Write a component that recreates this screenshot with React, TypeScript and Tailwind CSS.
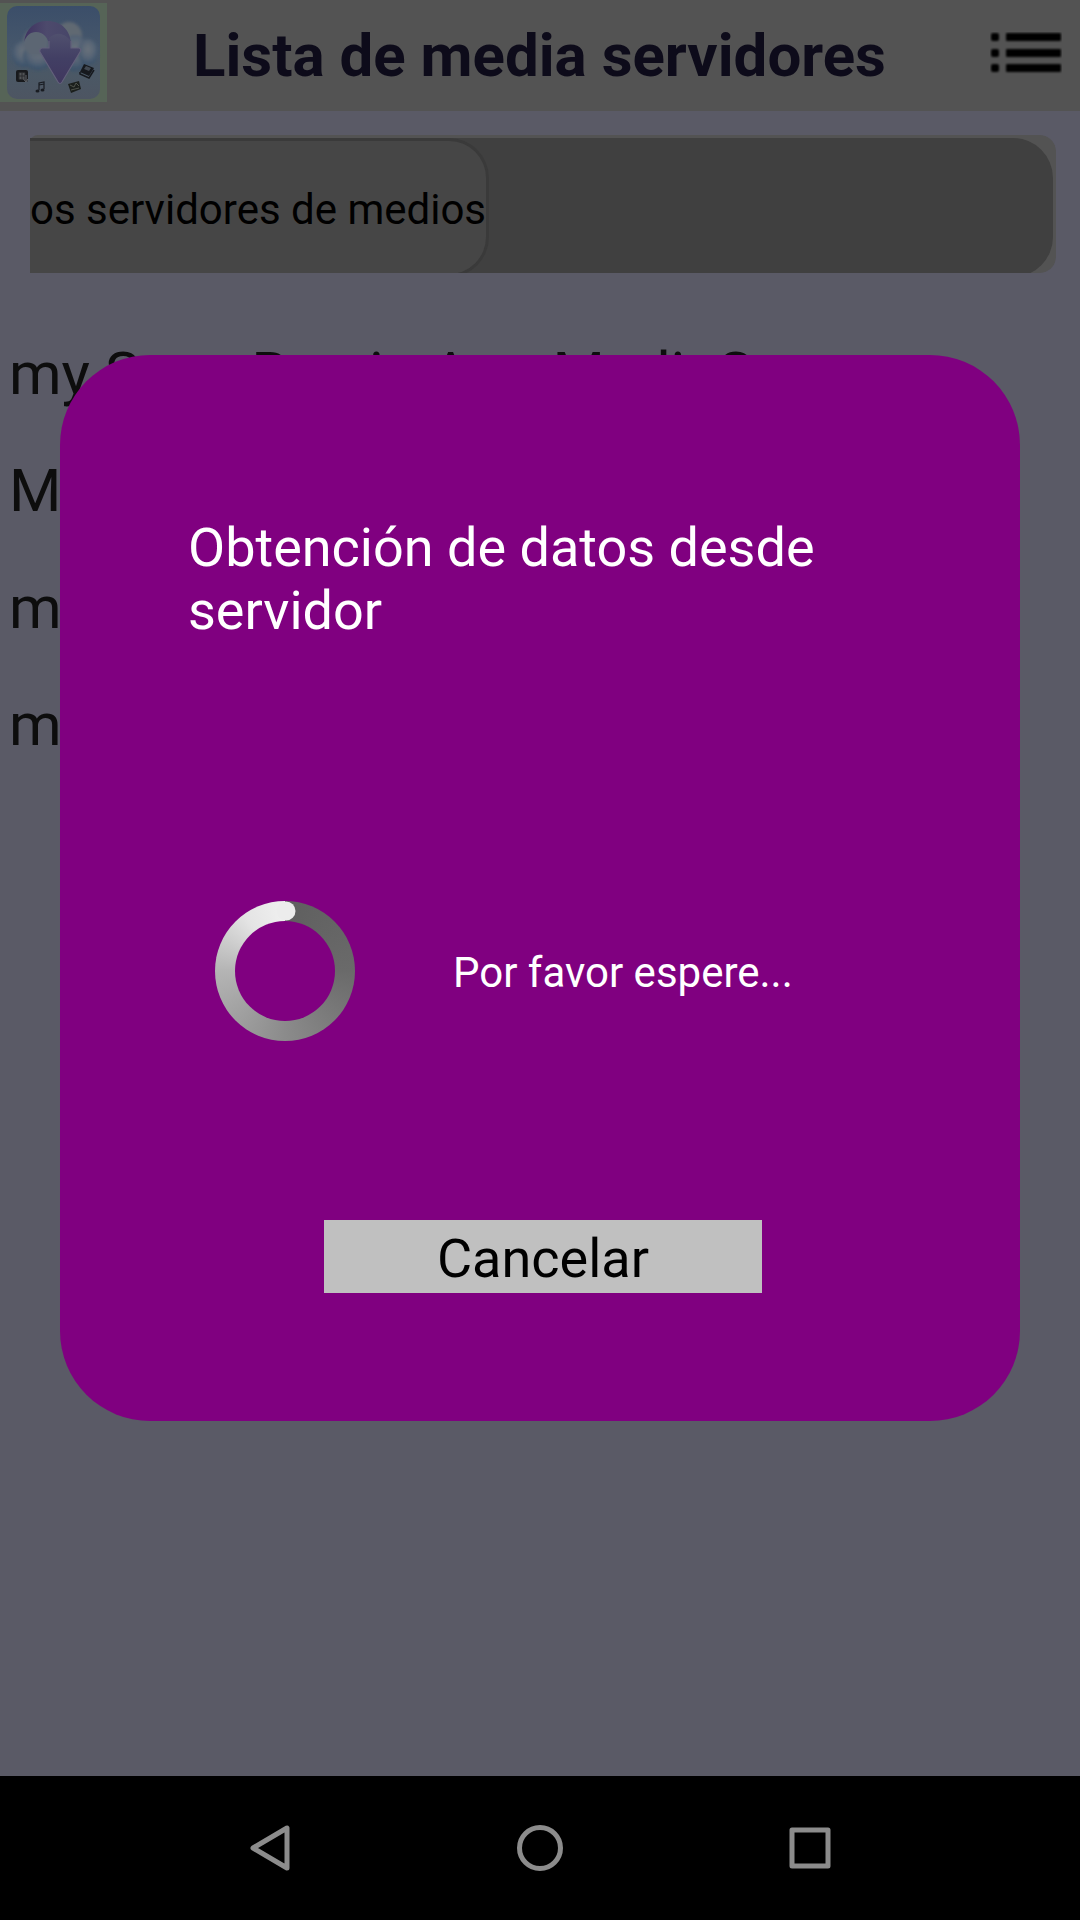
import { useState } from "react";

const servers = [
  "my Sony Bravia App MediaServer",
  "Media Server",
  "media server",
  "media server",
];

const AppLogo = () => (
  <svg viewBox="0 0 107 99" className="h-[99px] w-[107px]" aria-hidden="true">
    <defs>
      <linearGradient id="sky" x1="0" y1="0" x2="0" y2="1">
        <stop offset="0" stopColor="#3b4e69" />
        <stop offset="0.45" stopColor="#46576b" />
        <stop offset="0.75" stopColor="#4b5865" />
        <stop offset="1" stopColor="#4d5562" />
      </linearGradient>
      <linearGradient id="arrow" x1="0" y1="0" x2="0" y2="1">
        <stop offset="0" stopColor="#50506e" />
        <stop offset="0.5" stopColor="#423f64" />
        <stop offset="1" stopColor="#40375e" />
      </linearGradient>
      <linearGradient id="tail" x1="0" y1="0" x2="1" y2="0">
        <stop offset="0" stopColor="#3e3260" />
        <stop offset="0.4" stopColor="#4d4a6c" />
        <stop offset="1" stopColor="#454467" />
      </linearGradient>
      <radialGradient id="cloud" cx="0.5" cy="0.4" r="0.6">
        <stop offset="0" stopColor="#6a727b" />
        <stop offset="0.55" stopColor="#566475" />
        <stop offset="1" stopColor="#374f69" />
      </radialGradient>
      <filter id="soft">
        <feGaussianBlur stdDeviation="1.6" />
      </filter>
    </defs>
    <rect width="107" height="99" fill="#566457" />
    <rect x="7" y="3" width="93" height="93" rx="10" fill="url(#sky)" />
    <g filter="url(#soft)">
      <ellipse cx="24" cy="51" rx="12" ry="13" fill="url(#cloud)" />
      <ellipse cx="38" cy="53" rx="15" ry="14" fill="url(#cloud)" />
      <ellipse cx="36" cy="39" rx="13" ry="14" fill="#5b6673" />
      <ellipse cx="69" cy="33" rx="13" ry="14" fill="#616972" />
      <ellipse cx="75" cy="50" rx="14" ry="18" fill="url(#cloud)" />
      <ellipse cx="88" cy="49" rx="10" ry="13" fill="url(#cloud)" />
    </g>
    <path
      d="M24 39C26 25 35 18 47 18C62 18 72 28 71 45H79Q82 46 80 49L62 79Q60 82 58 79L40 49Q39 46 42 45H49C49 34 43 29 36 29C30 29 26 33 24 39Z"
      fill="url(#tail)"
    />
    <path
      d="M49 45V35Q60 25 71 38V45H79Q82 46 80 49L62 79Q60 82 58 79L40 49Q39 46 42 45Z"
      fill="url(#arrow)"
    />
    <path
      d="M71 38V45H79Q82 46 80 49L62 79Q60 82 58 79L40 49Q39 46 42 45H49V38"
      fill="none"
      stroke="#62607a"
      strokeWidth="1.2"
    />
    <rect x="16" y="67" width="12" height="12" rx="2" fill="#181a1d" />
    <path d="M19 69.5h6v7h-6zM22 69.5v7M19 73h6" fill="#505355" stroke="#292b2e" />
    <path d="M26 72v6M23.500 76L26 79L28 76" stroke="#606368" fill="none" />
    <path d="M39 87V80L44 79V86M39 82L44 81" fill="none" stroke="#191c22" strokeWidth="1.2" />
    <ellipse cx="37.500" cy="88" rx="2" ry="1.500" fill="#191c22" />
    <ellipse cx="42.500" cy="87" rx="2" ry="1.500" fill="#191c22" />
    <path d="M68 81L79 78L81 86L71 90Z" fill="#1b1f1c" />
    <path d="M70 82L74 84L76 80L79 83M71 87L75 86L79 85" fill="none" stroke="#4f534c" />
    <path d="M84 61L94 65L89 73L80 69Z" fill="#16191e" />
    <path d="M86 63L91 65L89 68L84 66Z" fill="#414851" />
    <path d="M80 69V71L89 75L94 67" fill="none" stroke="#16191e" strokeWidth="1.500" />
  </svg>
);

const MenuIcon = () => (
  <svg viewBox="0 0 72 42" className="h-[42px] w-[72px]" aria-hidden="true">
    <defs>
      <filter id="edge">
        <feGaussianBlur stdDeviation="0.8" />
      </filter>
    </defs>
    <g filter="url(#edge)">
      {[1, 17, 32].map((y) => (
        <g key={y}>
          <rect x="1" y={y} width="8" height="8" rx="2" />
          <rect x="16" y={y} width="55" height="8" rx="1" />
        </g>
      ))}
    </g>
  </svg>
);

const Spinner = () => (
  <div
    role="status"
    aria-label="Cargando"
    className="flex size-[140px] items-center justify-center rounded-full bg-[conic-gradient(#5f5f5f,#6a6a6a_25%,#8b8b8b_50%,#b4b4b4_75%,#e4e4e4_90%,#f0f0f0)]"
  >
    <svg viewBox="0 0 140 140" className="size-[140px]" aria-hidden="true">
      <circle cx="70" cy="70" r="50" fill="#800080" />
      <circle cx="71" cy="10" r="9.500" fill="#ececec" />
    </svg>
  </div>
);

const ProgressDialog = ({ onCancel }: { onCancel: () => void }) => (
  <div className="absolute inset-0 flex flex-col justify-center px-15">
    <div
      role="dialog"
      aria-labelledby="dialog-title"
      className="flex flex-col items-start rounded-[90px] bg-[#800080] px-32 pt-[161px] pb-32 text-white"
    >
      <h2 id="dialog-title" className="text-[54px] leading-[63px]">
        Obtención de datos desde servidor
      </h2>
      <div className="mt-[259px] ml-[27px] flex items-center gap-[98px]">
        <Spinner />
        <p className="pt-1 text-[42px] leading-[50px]">Por favor espere...</p>
      </div>
      <button
        type="button"
        onClick={onCancel}
        className="mt-[179px] ml-[136px] h-[73px] w-[438px] bg-[#c0c0c0] pt-1 text-[54px] leading-[63px] text-black"
      >
        Cancelar
      </button>
    </div>
  </div>
);

const NavigationBar = () => (
  <nav className="grid h-36 grid-cols-3 items-center justify-items-center bg-black px-[12.5%]">
    <button type="button" aria-label="Atrás">
      <svg viewBox="0 0 48 48" className="size-12" fill="none" stroke="#8c8c8c" strokeWidth="5" strokeLinejoin="round">
        <path d="M41 4V44L7 24Z" />
      </svg>
    </button>
    <button type="button" aria-label="Inicio">
      <svg viewBox="0 0 48 48" className="size-12" fill="none" stroke="#8c8c8c" strokeWidth="5">
        <circle cx="24" cy="24" r="20.500" />
      </svg>
    </button>
    <button type="button" aria-label="Recientes">
      <svg viewBox="0 0 48 48" className="size-12" fill="none" stroke="#8c8c8c" strokeWidth="5" strokeLinejoin="round">
        <rect x="6" y="6" width="36" height="36" />
      </svg>
    </button>
  </nav>
);

const App = () => {
  const [loading, setLoading] = useState(true);

  return (
    <div className="flex min-h-screen flex-col font-[Roboto,sans-serif]">
      <div className="relative flex flex-1 flex-col bg-[#5a5a66]">
        <header className="flex h-[111px] items-center bg-[#535353] pr-[18px] pb-[6px]">
          <AppLogo />
          <h1 className="flex-1 pt-[6px] pl-[86px] text-[60px] leading-[70px] font-bold text-[#0d0b1a]">
            Lista de media servidores
          </h1>
          <button type="button" aria-label="Menú">
            <MenuIcon />
          </button>
        </header>

        <div className="mx-6 mt-6 h-[138px] overflow-hidden rounded-r-2xl pl-[6px]">
          <div className="h-full rounded-tl-lg rounded-r-2xl bg-[#535353] pt-[3px] pr-[3px]">
            <div className="h-[139px] rounded-r-[40px] bg-[#404040]">
              <button
                type="button"
                className="h-full rounded-r-[40px] border-t-3 border-r-3 border-b-3 border-[#3a3a3a] bg-[#464646] pt-1 text-[42px] leading-[50px] text-black"
              >
                os servidores de medios
              </button>
            </div>
          </div>
        </div>

        <ul className="mt-[42px] px-[9px] text-[60px] text-[#0d0d0d]">
          {servers.map((name, index) => (
            <li key={index} className="h-[117px] truncate leading-[117px]">
              {name}
            </li>
          ))}
        </ul>

        {loading && <ProgressDialog onCancel={() => setLoading(false)} />}
      </div>
      <NavigationBar />
    </div>
  );
};

export default App;
